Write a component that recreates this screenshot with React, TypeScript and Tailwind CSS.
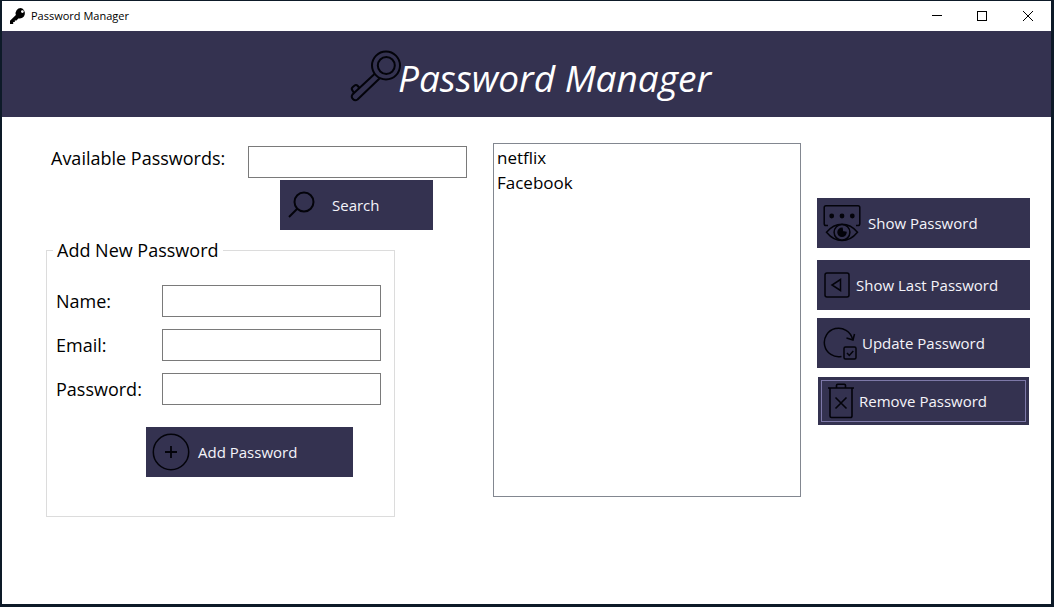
import type { ReactNode } from "react";

const buttonBase =
  "flex items-center bg-[#343250] text-left text-[15px] leading-5 text-[#f4f4fa]";

function KeyIcon() {
  return (
    <svg viewBox="0 0 16 16" className="h-4 w-4" aria-hidden="true">
      <path
        fillRule="evenodd"
        d="M10.8 0a5.2 5.2 0 0 0-4.9 6.9L0 12.800V16h3.200v-1.900h1.600v-1.600h1.700l1.800-2.100A5.200 5.200 0 1 0 10.800 0Zm1.600 2.200a1.400 1.400 0 1 1 0 2.800 1.400 1.400 0 0 1 0-2.800Z"
      />
    </svg>
  );
}

function LargeKeyIcon() {
  return (
    <svg
      viewBox="0 0 52 52"
      className="h-[52px] w-[52px] shrink-0"
      fill="none"
      stroke="#03030a"
      strokeWidth="2"
      strokeLinejoin="round"
      aria-hidden="true"
    >
      <circle cx="36" cy="15.500" r="14" />
      <circle cx="36.300" cy="15.500" r="8.500" />
      <path d="M24.500 24 4 43l-1.500 1.500a3.600 3.600 0 0 0 5 5L29.500 28.500" />
      <path d="m9.500 38-1.700-2a2.500 2.500 0 0 0-3.500-.300L2.800 37a2.500 2.500 0 0 0-.3 3.500L4 43" />
    </svg>
  );
}

function SearchIcon() {
  return (
    <svg viewBox="0 0 28 28" className="h-7 w-7 shrink-0" fill="none" stroke="#03030a" strokeWidth="2" aria-hidden="true">
      <circle cx="16" cy="11" r="9.500" />
      <path d="M9.500 17.500 1 26" />
    </svg>
  );
}

function AddIcon() {
  return (
    <svg viewBox="0 0 38 38" className="h-[38px] w-[38px] shrink-0" fill="none" stroke="#03030a" strokeWidth="1.500" aria-hidden="true">
      <circle cx="19" cy="19" r="17.700" />
      <path d="M19 13v12M13 19h12" strokeWidth="1.800" />
    </svg>
  );
}

function ShowIcon() {
  return (
    <svg viewBox="0 0 38 38" className="h-[38px] w-[38px] shrink-0" fill="none" stroke="#03030a" strokeWidth="1.500" aria-hidden="true">
      <path d="M5 21.500H3a1.800 1.800 0 0 1-1.800-1.800V3.500A1.800 1.800 0 0 1 3 1.700h32a1.800 1.800 0 0 1 1.800 1.800v16.200a1.800 1.800 0 0 1-1.800 1.800h-2" />
      <g fill="#03030a" stroke="none">
        <circle cx="8.700" cy="12" r="2.400" />
        <circle cx="19" cy="12" r="2.400" />
        <circle cx="29.300" cy="12" r="2.400" />
      </g>
      <path d="M3.500 28.200C8 22.700 13 20.200 19 20.200s11 2.500 15.500 8C30 33.700 25 36.500 19 36.500S8 33.700 3.500 28.200Z" />
      <circle cx="19" cy="28.300" r="7.900" />
      <path d="M19 24.300a4 4 0 1 0 4 4l-3.500-.500Z" fill="#03030a" />
    </svg>
  );
}

function LastIcon() {
  return (
    <svg viewBox="0 0 26 26" className="h-[26px] w-[26px] shrink-0" fill="none" stroke="#03030a" strokeWidth="1.500" aria-hidden="true">
      <rect x="1" y="1" width="24" height="24" rx="2" />
      <path d="M16.500 7.500v11L8 13Z" />
    </svg>
  );
}

function UpdateIcon() {
  return (
    <svg viewBox="0 0 34 34" className="h-[34px] w-[34px] shrink-0" fill="none" stroke="#03030a" strokeWidth="1.500" aria-hidden="true">
      <path d="M18.500 30.500A14.300 14.300 0 1 1 29.500 13" />
      <path d="M23.500 12 30 14l1.500-6" />
      <rect x="21" y="21" width="12" height="12" rx="1.500" />
      <path d="m24 27 2.300 2.500 4-4.500" />
    </svg>
  );
}

function RemoveIcon() {
  return (
    <svg viewBox="0 0 28 36" className="h-9 w-7 shrink-0" fill="none" stroke="#03030a" strokeWidth="1.600" aria-hidden="true">
      <path d="M1 5h26M3 5v28a1.500 1.500 0 0 0 1.500 1.500h19A1.500 1.500 0 0 0 25 33V5M9.500 5V2.500A1.200 1.200 0 0 1 10.700 1.300h6.600a1.200 1.200 0 0 1 1.200 1.200V5" />
      <path d="m8.500 14.500 11 11M19.500 14.500l-11 11" />
    </svg>
  );
}

function Field({ id, label, type }: { id: string; label: string; type: string }) {
  return (
    <div className="flex items-center">
      <label htmlFor={id} className="w-[106px] shrink-0">
        {label}
      </label>
      <input id={id} type={type} className="h-8 w-[219px] border border-[#7a7a7a] bg-white px-1" />
    </div>
  );
}

function ActionButton({ icon, spacing, children }: { icon: ReactNode; spacing: string; children: ReactNode }) {
  return (
    <button type="button" className={`${buttonBase} h-[50px] w-full ${spacing}`}>
      {icon}
      {children}
    </button>
  );
}

export default function App() {
  return (
    <div className="flex min-h-screen flex-col border-t border-r-[3px] border-b-[3px] border-l-2 border-[#0d1a28] bg-white font-['Open_Sans','Noto_Sans',sans-serif] text-[18px] leading-[25px] text-black">
      <div className="flex h-[30px] items-center bg-white pl-2">
        <KeyIcon />
        <span className="ml-[5px] flex-1 text-[11px] leading-4">Password Manager</span>
        <button type="button" aria-label="Minimize" className="flex h-full w-[45px] items-center justify-center">
          <svg viewBox="0 0 10 10" className="h-2.5 w-2.5" stroke="black" shapeRendering="crispEdges">
            <path d="M0 4.500h10" />
          </svg>
        </button>
        <button type="button" aria-label="Maximize" className="flex h-full w-[45px] items-center justify-center">
          <svg viewBox="0 0 10 10" className="h-2.5 w-2.5" stroke="black" fill="none" shapeRendering="crispEdges">
            <path d="M.5.5h9v9h-9z" />
          </svg>
        </button>
        <button type="button" aria-label="Close" className="flex h-full w-[47px] items-center justify-center">
          <svg viewBox="0 0 10 10" className="h-2.5 w-2.5" stroke="black">
            <path d="m0 0 10 10M10 0 0 10" />
          </svg>
        </button>
      </div>

      <header className="flex h-[86px] items-center justify-center bg-[#343250] pt-1 pl-2">
        <LargeKeyIcon />
        <h1 className="-ml-1 pt-1 text-[37px] leading-[52px] text-white italic">Password Manager</h1>
      </header>

      <main className="flex flex-1 items-start pt-[26px] pr-[21px] pl-11">
        <div className="mr-[26px] w-[421px] shrink-0 pt-[3px]">
          <div className="flex items-start pl-[5px]">
            <label htmlFor="search" className="flex-1">
              Available Passwords:
            </label>
            <input id="search" type="text" className="h-8 w-[219px] border border-[#7a7a7a] bg-white px-1" />
          </div>
          <button type="button" className={`${buttonBase} mt-0.5 ml-[234px] h-[50px] w-[153px] gap-4 pl-2`}>
            <SearchIcon />
            Search
          </button>

          <fieldset className="mt-2 w-[349px] border border-[#dcdcdc] pb-[39px] pl-[9px]">
            <legend className="-ml-[3px] px-1">Add New Password</legend>
            <div className="mt-[22px] flex flex-col gap-3">
              <Field id="name" label="Name:" type="text" />
              <Field id="email" label="Email:" type="email" />
              <Field id="password" label="Password:" type="password" />
            </div>
            <button type="button" className={`${buttonBase} mt-[22px] ml-[90px] h-[50px] w-[207px] gap-2 pl-1.5`}>
              <AddIcon />
              Add Password
            </button>
          </fieldset>
        </div>

        <select
          size={14}
          aria-label="Saved passwords"
          className="mr-4 h-[354px] min-w-0 flex-1 appearance-none overflow-hidden border border-[#828790] bg-white pt-0.5 text-[17px]"
        >
          <option className="h-[25px] px-[3px] leading-[25px]">netflix</option>
          <option className="h-[25px] px-[3px] leading-[25px]">Facebook</option>
        </select>

        <div className="w-[213px] shrink-0 pt-[55px]">
          <ActionButton icon={<ShowIcon />} spacing="gap-[7px] pl-1.5">
            Show Password
          </ActionButton>
          <div className="mt-3 flex flex-col gap-2">
            <ActionButton icon={<LastIcon />} spacing="gap-1.5 pl-[7px]">
              Show Last Password
            </ActionButton>
            <ActionButton icon={<UpdateIcon />} spacing="gap-[5px] pl-1.5">
              Update Password
            </ActionButton>
            <div className="flex p-px">
              <button
                type="button"
                className={`${buttonBase} h-12 flex-1 gap-1 pl-[9px] outline outline-1 -outline-offset-4 outline-[#7d78a8]`}
              >
                <RemoveIcon />
                Remove Password
              </button>
            </div>
          </div>
        </div>
      </main>
    </div>
  );
}
